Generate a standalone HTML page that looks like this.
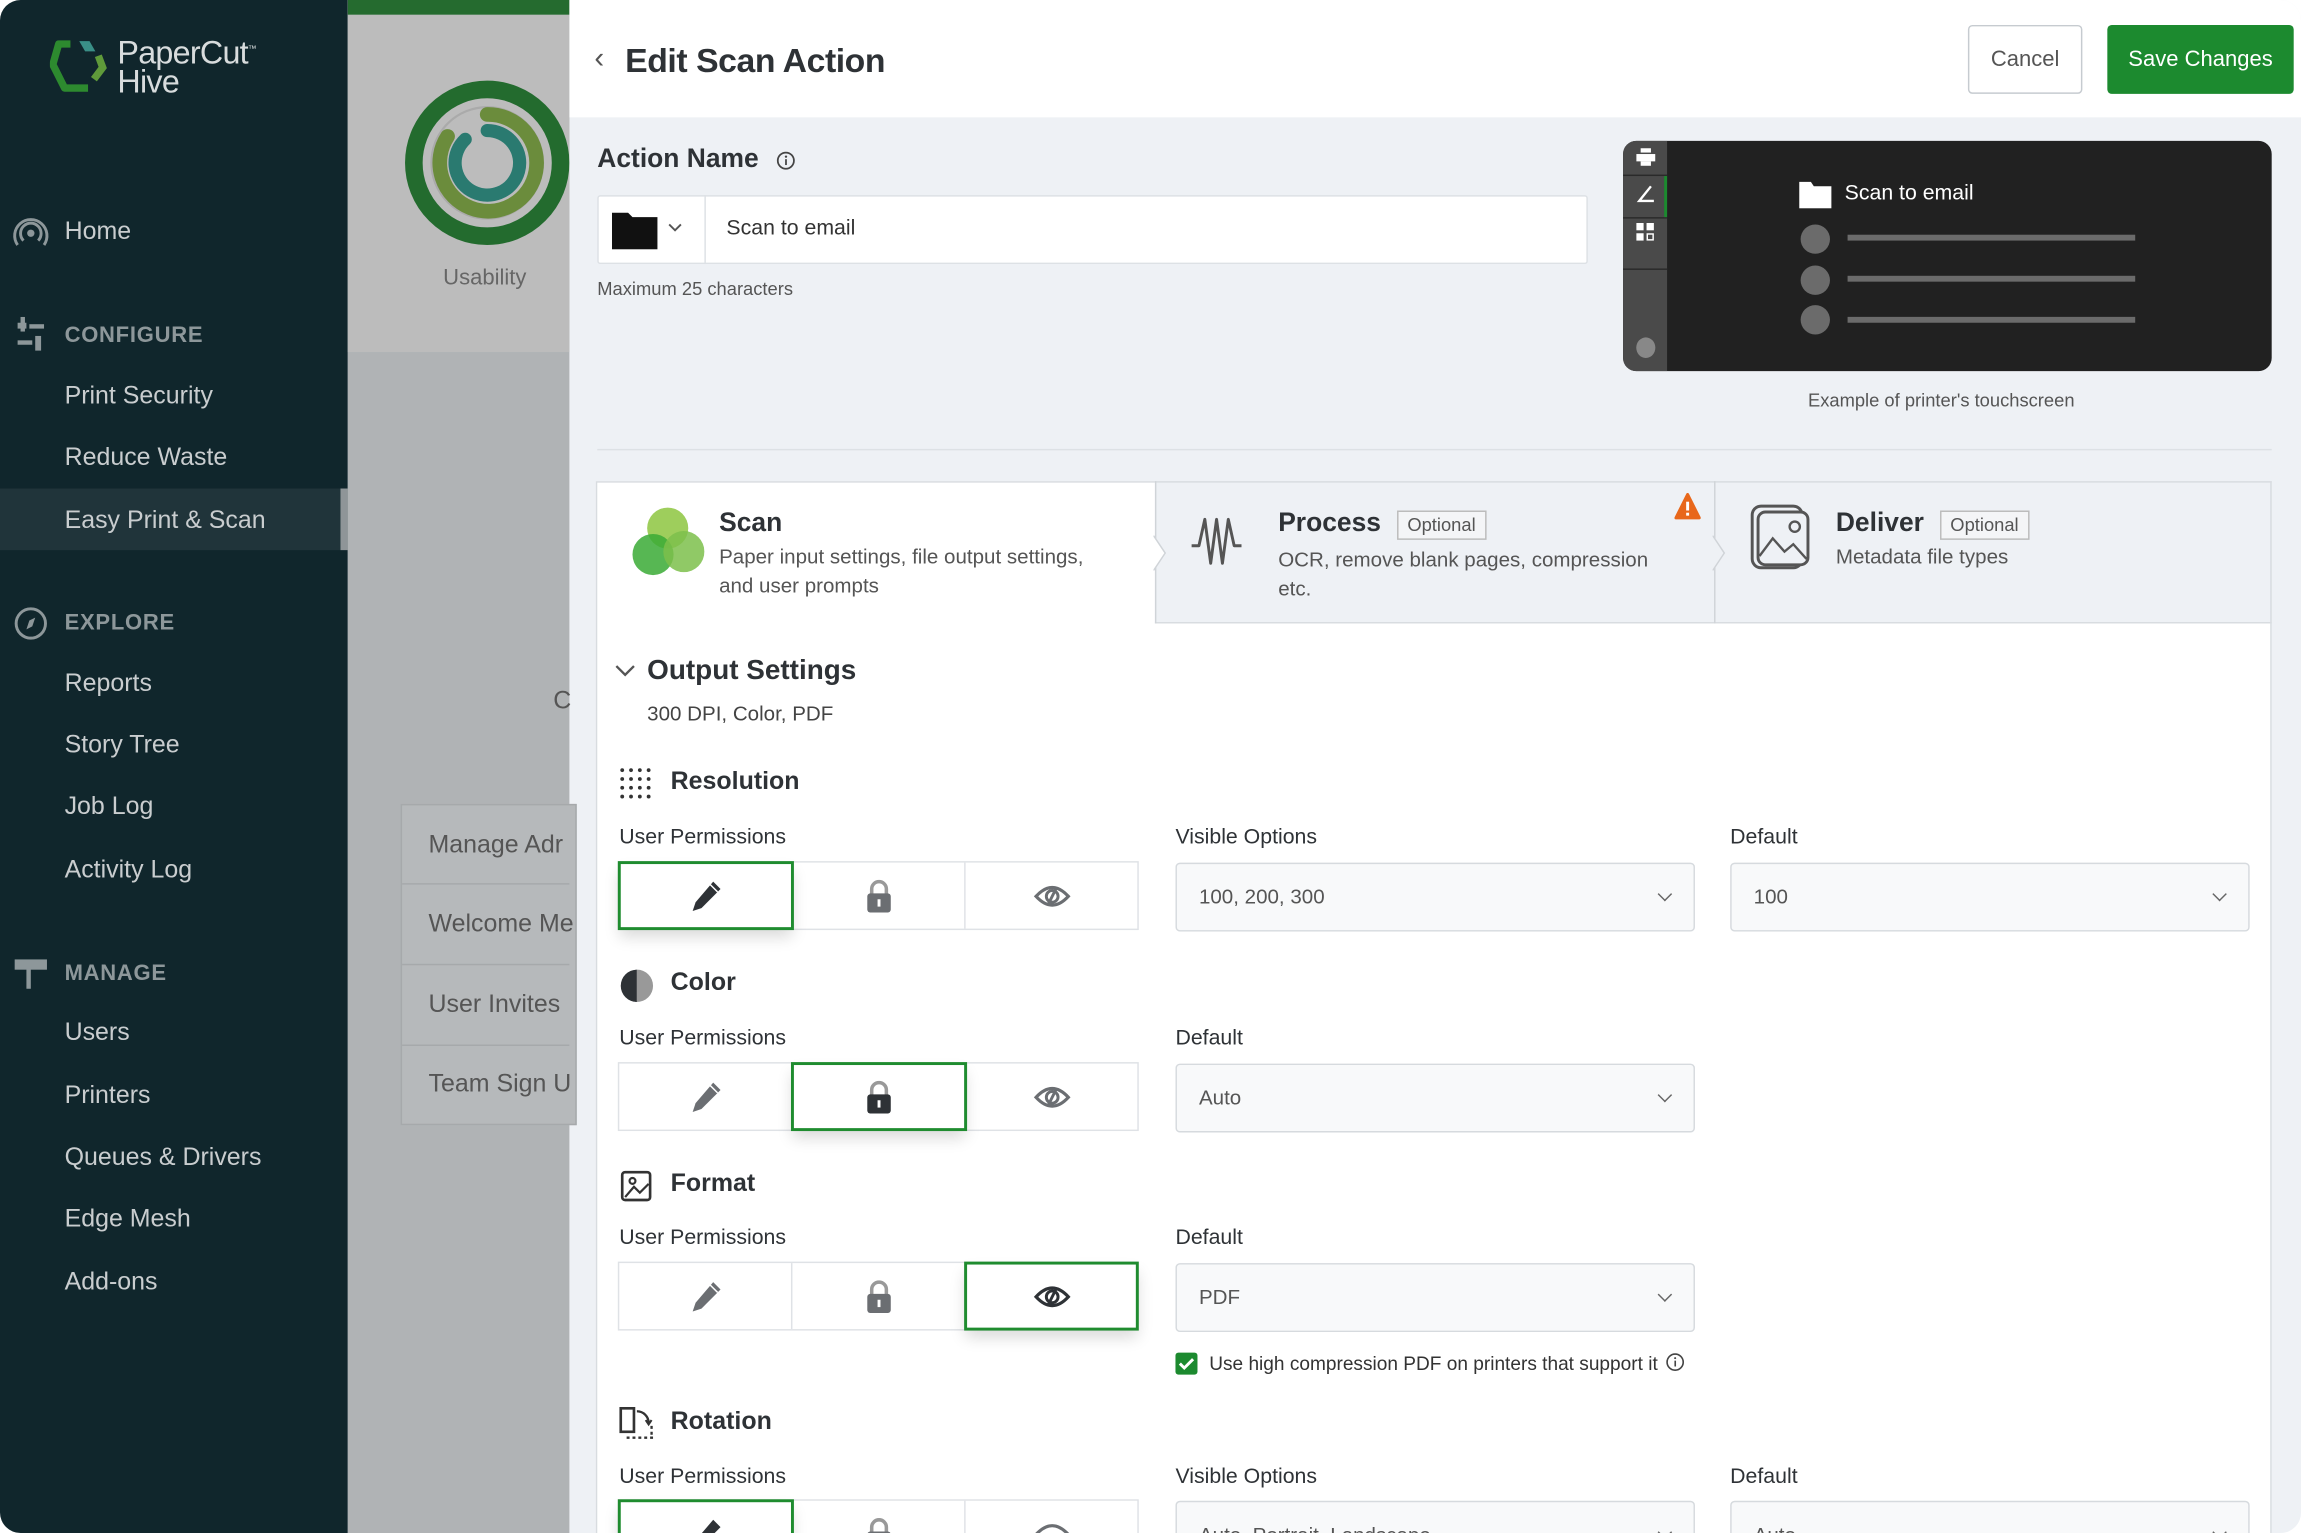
<!DOCTYPE html>
<html><head><meta charset="utf-8">
<style>
*{box-sizing:border-box;margin:0;padding:0}
html,body{width:2301px;height:1533px;overflow:hidden;background:#fff;font-family:"Liberation Sans",sans-serif}
#w{position:absolute;left:0;top:0;width:1568px;height:1045px;transform:scale(1.4675,1.467);transform-origin:0 0;overflow:hidden;border-radius:14px;background:#eef1f5}
.a{position:absolute}
.side{left:0;top:0;width:237px;height:1045px;background:#10262c;color:#c8cdcf}
.nav{position:absolute;left:44px;font-size:17px;color:#c9cdcf}
.sec{position:absolute;left:44px;font-size:15px;font-weight:bold;color:#8d979a;letter-spacing:.5px}
.lbl{position:absolute;font-size:14.5px;color:#2e3236}
.h{position:absolute;font-size:17px;font-weight:bold;color:#2e3236}
.perm{position:absolute;width:355px;height:47px;border:1px solid #dfe2e6;background:#fff;display:flex}
.perm div{flex:1;border-right:1px solid #dfe2e6;display:flex;align-items:center;justify-content:center;position:relative}
.perm div:last-child{border-right:none}
.perm .on{outline:2px solid #1f8c2f;outline-offset:-1px;box-shadow:0 6px 10px rgba(0,0,0,.15);z-index:2}
.sel{position:absolute;width:354px;height:47px;border:1px solid #d6dade;border-radius:3px;background:#f8f9fa;font-size:14px;color:#555;padding:14px 15px}
.sel:after{content:"";position:absolute;right:16px;top:17px;width:6px;height:6px;border-right:1.5px solid #666;border-bottom:1.5px solid #666;transform:rotate(45deg)}
.mi{position:absolute;left:292px;font-size:17px;color:#555;white-space:nowrap}
</style></head><body><div id="w">

<div class="a side">
 <svg class="a" style="left:34px;top:24px" width="44" height="42" viewBox="0 0 44 42"><path d="M14 6 L6 6 L2 20 L10 36 L26 36" fill="none" stroke="#2d8a2f" stroke-width="5" stroke-linejoin="round"/><path d="M30 30 L36 22 L33 14" fill="none" stroke="#5f9a3a" stroke-width="5"/><path d="M20 4 L27 4 L31 11 L24 11Z" fill="#3a8f87"/></svg>
 <div class="a" style="left:80px;top:24px;font-size:22px;color:#d8dcdd;line-height:20px;letter-spacing:-.5px">PaperCut<sup style="font-size:6px">™</sup><br>Hive</div>
 <svg class="a" style="left:8px;top:147px" width="26" height="24" viewBox="0 0 26 24"><circle cx="13" cy="12" r="2.5" fill="#8d979a"/><path d="M8 17a7 7 0 1 1 10 0" fill="none" stroke="#8d979a" stroke-width="2"/><path d="M4 20a11 11 0 1 1 18 0" fill="none" stroke="#8d979a" stroke-width="2"/></svg>
 <div class="nav" style="top:148px">Home</div>
 <svg class="a" style="left:10px;top:216px" width="22" height="24" viewBox="0 0 22 24"><rect x="2" y="4" width="6" height="4" fill="#8d979a"/><rect x="4" y="0" width="3" height="10" fill="#8d979a"/><rect x="10" y="5" width="10" height="3" fill="#8d979a"/><rect x="2" y="16" width="10" height="3" fill="#8d979a"/><rect x="14" y="13" width="4" height="10" fill="#8d979a"/></svg>
 <div class="sec" style="top:220px">CONFIGURE</div>
 <div class="nav" style="top:260px">Print Security</div>
 <div class="nav" style="top:302px">Reduce Waste</div>
 <div class="a" style="left:0;top:333px;width:232px;height:42px;background:#20343a"></div>
 <div class="a" style="left:232px;top:333px;width:5px;height:42px;background:#8f9598"></div>
 <div class="nav" style="top:345px">Easy Print &amp; Scan</div>
 <svg class="a" style="left:8px;top:412px" width="26" height="26" viewBox="0 0 26 26"><circle cx="13" cy="13" r="10" fill="none" stroke="#8d979a" stroke-width="2"/><path d="M16 9 L14 15 L10 17 L12 11Z" fill="#8d979a"/></svg>
 <div class="sec" style="top:416px">EXPLORE</div>
 <div class="nav" style="top:456px">Reports</div>
 <div class="nav" style="top:498px">Story Tree</div>
 <div class="nav" style="top:540px">Job Log</div>
 <div class="nav" style="top:583px">Activity Log</div>
 <svg class="a" style="left:8px;top:650px" width="26" height="26" viewBox="0 0 26 26"><rect x="2" y="4" width="22" height="7" fill="#8d979a"/><rect x="10" y="10" width="3" height="14" fill="#8d979a"/></svg>
 <div class="sec" style="top:655px">MANAGE</div>
 <div class="nav" style="top:694px">Users</div>
 <div class="nav" style="top:737px">Printers</div>
 <div class="nav" style="top:779px">Queues &amp; Drivers</div>
 <div class="nav" style="top:821px">Edge Mesh</div>
 <div class="nav" style="top:864px">Add-ons</div>
</div>

<div class="a" style="left:237px;top:0;width:151px;height:1045px;background:#b0b3b5"></div>
<div class="a" style="left:237px;top:0;width:151px;height:240px;background:#bcbcbc"></div>
<div class="a" style="left:237px;top:0;width:151px;height:10px;background:#256b2f"></div>
<svg class="a" style="left:275px;top:53px" width="113" height="118" viewBox="0 0 113 118"><circle cx="57" cy="58" r="50" fill="none" stroke="#236b2e" stroke-width="12"/><circle cx="57" cy="58" r="38" fill="none" stroke="#aaa" stroke-width="1.5"/><path d="M57 25 A33 33 0 1 1 30 40" fill="none" stroke="#6b8c3c" stroke-width="10" stroke-linecap="round"/><path d="M57 36 A22 22 0 1 1 42 42" fill="none" stroke="#2a7a70" stroke-width="9" stroke-linecap="round"/></svg>
<div class="a" style="left:302px;top:181px;font-size:15px;color:#666">Usability</div>
<div class="a" style="left:377px;top:468px;font-size:17px;color:#555">C</div>
<div class="a" style="left:273px;top:548px;width:120px;height:219px;background:#b6b9bb;border:1px solid #a6a9ab"></div>
<div class="mi" style="top:566px">Manage Adr</div>
<div class="mi" style="top:620px">Welcome Me</div>
<div class="mi" style="top:675px">User Invites</div>
<div class="mi" style="top:729px">Team Sign U</div>
<div class="a" style="left:274px;top:602px;width:114px;height:1px;background:#a6a9ab"></div>
<div class="a" style="left:274px;top:657px;width:114px;height:1px;background:#a6a9ab"></div>
<div class="a" style="left:274px;top:712px;width:114px;height:1px;background:#a6a9ab"></div>

<div class="a" style="left:388px;top:0;width:1180px;height:80px;background:#fff"></div>
<div class="a" style="left:405px;top:29px;font-size:20px;color:#555">‹</div>
<div class="a" style="left:426px;top:28px;font-size:23px;color:#2e3236;font-weight:bold;letter-spacing:-.3px">Edit Scan Action</div>
<div class="a" style="left:1341px;top:17px;width:78px;height:47px;border:1px solid #c6cbd0;border-radius:3px;background:#fff;font-size:15px;color:#555;text-align:center;line-height:45px">Cancel</div>
<div class="a" style="left:1436px;top:17px;width:127px;height:47px;background:#1c8a2f;border-radius:3px;font-size:15px;color:#fff;text-align:center;line-height:47px">Save Changes</div>

<div class="a" style="left:407px;top:98px;font-size:18px;font-weight:bold;color:#2e3236">Action Name</div>
<svg class="a" style="left:529px;top:103px" width="13" height="13" viewBox="0 0 13 13"><circle cx="6.5" cy="6.5" r="5.5" fill="none" stroke="#444" stroke-width="1.2"/><rect x="6" y="5.5" width="1.2" height="4" fill="#444"/><circle cx="6.6" cy="3.8" r=".8" fill="#444"/></svg>
<div class="a" style="left:407px;top:133px;width:675px;height:47px;border:1px solid #dde1e5;background:#fff;border-radius:2px"></div>
<div class="a" style="left:480px;top:133px;width:1px;height:47px;background:#dde1e5"></div>
<svg class="a" style="left:417px;top:143px" width="32" height="27" viewBox="0 0 32 27"><path d="M0 2h11l3 3h17v22H0Z" fill="#111"/></svg>
<svg class="a" style="left:455px;top:152px" width="10" height="7" viewBox="0 0 10 7"><path d="M1 1l4 4 4-4" fill="none" stroke="#555" stroke-width="1.3"/></svg>
<div class="a" style="left:495px;top:148px;font-size:14.5px;color:#333">Scan to email</div>
<div class="a" style="left:407px;top:190px;font-size:12.5px;color:#555">Maximum 25 characters</div>

<div class="a" style="left:1106px;top:96px;width:442px;height:157px;background:#212121;border-radius:9px;overflow:hidden">
 <div class="a" style="left:0;top:0;width:30px;height:157px;background:#4a4a4a"></div>
 <div class="a" style="left:0;top:23px;width:30px;height:1px;background:#2a2a2a"></div>
 <div class="a" style="left:0;top:52px;width:30px;height:1px;background:#2a2a2a"></div>
 <div class="a" style="left:0;top:87px;width:30px;height:1px;background:#2a2a2a"></div>
 <div class="a" style="left:28px;top:24px;width:2px;height:28px;background:#1c8a2f"></div>
 <svg class="a" style="left:9px;top:5px" width="13" height="13" viewBox="0 0 13 13"><rect x="3" y="0" width="7" height="3" fill="#fff"/><rect x="0" y="4" width="13" height="5" fill="#fff"/><rect x="3" y="9" width="7" height="3" fill="#fff"/></svg>
 <svg class="a" style="left:9px;top:30px" width="13" height="13" viewBox="0 0 13 13"><path d="M10 1 L2 11 H12" fill="none" stroke="#fff" stroke-width="1.6"/></svg>
 <svg class="a" style="left:9px;top:56px" width="13" height="13" viewBox="0 0 13 13"><rect x="0" y="0" width="5" height="5" fill="#fff"/><rect x="7" y="0" width="5" height="5" fill="#fff"/><rect x="0" y="7" width="5" height="5" fill="#fff"/><rect x="7.5" y="7.5" width="4" height="4" fill="none" stroke="#fff"/></svg>
 <div class="a" style="left:9px;top:134px;width:13px;height:14px;border-radius:50%;background:#888"></div>
 <svg class="a" style="left:120px;top:27px" width="22" height="19" viewBox="0 0 22 19"><path d="M0 1h8l2 3h12v15H0Z" fill="#fff"/></svg>
 <div class="a" style="left:151px;top:28px;font-size:14.5px;color:#fff">Scan to email</div>
 <div class="a" style="left:121px;top:57px;width:20px;height:20px;border-radius:50%;background:#6b6b6b"></div>
 <div class="a" style="left:121px;top:85px;width:20px;height:20px;border-radius:50%;background:#6b6b6b"></div>
 <div class="a" style="left:121px;top:112px;width:20px;height:20px;border-radius:50%;background:#6b6b6b"></div>
 <div class="a" style="left:153px;top:64px;width:196px;height:4px;background:#6b6b6b"></div>
 <div class="a" style="left:153px;top:92px;width:196px;height:4px;background:#6b6b6b"></div>
 <div class="a" style="left:153px;top:120px;width:196px;height:4px;background:#6b6b6b"></div>
</div>
<div class="a" style="left:1232px;top:266px;font-size:12.5px;color:#555">Example of printer's touchscreen</div>
<div class="a" style="left:407px;top:306px;width:1141px;height:1px;background:#dde1e5"></div>

<div class="a" style="left:406px;top:328px;width:1142px;height:730px;background:#fff;border:1px solid #d8dce0"></div>
<div class="a" style="left:787px;top:328px;width:761px;height:97px;background:#eef1f5;border-bottom:1px solid #d8dce0;border-top:1px solid #d8dce0;border-right:1px solid #d8dce0"></div>
<div class="a" style="left:787px;top:328px;width:1px;height:97px;background:#d0d4d8"></div>
<div class="a" style="left:1168px;top:328px;width:1px;height:97px;background:#d0d4d8"></div>
<svg class="a" style="left:786px;top:365px" width="10" height="24" viewBox="0 0 10 24"><path d="M0 0 L8 12 L0 24" fill="#fff" stroke="#d0d4d8"/></svg>
<svg class="a" style="left:1167px;top:365px" width="10" height="24" viewBox="0 0 10 24"><path d="M0 0 L8 12 L0 24" fill="#eef1f5" stroke="#d0d4d8"/></svg>

<svg class="a" style="left:430px;top:345px" width="50" height="48" viewBox="0 0 50 48"><circle cx="25" cy="15" r="14" fill="#8dc63f" opacity=".85"/><circle cx="15" cy="33" r="14" fill="#3aaa35" opacity=".85"/><circle cx="36" cy="31" r="14" fill="#7cc04b" opacity=".85"/></svg>
<div class="a" style="left:490px;top:346px;font-size:18px;font-weight:bold;color:#2e3236">Scan</div>
<div class="a" style="left:490px;top:369px;font-size:14px;color:#555;line-height:20px">Paper input settings, file output settings,<br>and user prompts</div>

<svg class="a" style="left:811px;top:350px" width="48" height="40" viewBox="0 0 48 40"><path d="M1 22h5l4-18 4 30 4-30 4 30 4-30 4 18h5" fill="none" stroke="#555" stroke-width="2" stroke-linejoin="round"/></svg>
<div class="a" style="left:871px;top:346px;font-size:18px;font-weight:bold;color:#2e3236">Process</div>
<div class="a" style="left:952px;top:348px;padding:2px 6px;border:1px solid #bbb;font-size:12.5px;color:#555;background:#f4f5f7">Optional</div>
<div class="a" style="left:871px;top:371px;font-size:14px;color:#555;line-height:20px">OCR, remove blank pages, compression<br>etc.</div>
<svg class="a" style="left:1141px;top:336px" width="18" height="19" viewBox="0 0 18 19"><path d="M9 1 L17 17 H1Z" fill="#e8671b" stroke="#e8671b" stroke-linejoin="round" stroke-width="2"/><rect x="8" y="6" width="2" height="6" fill="#fff"/><rect x="8" y="13.5" width="2" height="2" fill="#fff"/></svg>

<svg class="a" style="left:1192px;top:343px" width="48" height="48" viewBox="0 0 48 48"><rect x="2" y="2" width="34" height="42" rx="6" fill="none" stroke="#555" stroke-width="2"/><rect x="6" y="6" width="34" height="36" rx="5" fill="#eef1f5" stroke="#555" stroke-width="2"/><circle cx="31" cy="16" r="3.5" fill="none" stroke="#555" stroke-width="1.6"/><path d="M7 36 L16 24 L24 33 L30 28 L39 38" fill="none" stroke="#555" stroke-width="1.6"/></svg>
<div class="a" style="left:1251px;top:346px;font-size:18px;font-weight:bold;color:#2e3236">Deliver</div>
<div class="a" style="left:1322px;top:348px;padding:2px 6px;border:1px solid #bbb;font-size:12.5px;color:#555;background:#f4f5f7">Optional</div>
<div class="a" style="left:1251px;top:371px;font-size:14px;color:#555">Metadata file types</div>

<svg class="a" style="left:419px;top:453px" width="14" height="10" viewBox="0 0 14 10"><path d="M1 1l6 6 6-6" fill="none" stroke="#555" stroke-width="1.6"/></svg>
<div class="a" style="left:441px;top:447px;font-size:19px;font-weight:bold;color:#2e3236">Output Settings</div>
<div class="a" style="left:441px;top:478px;font-size:14px;color:#444">300 DPI, Color, PDF</div>

<svg class="a" style="left:422px;top:523px" width="24" height="24" viewBox="0 0 24 24"><g fill="#333"><circle cx="2" cy="2" r="1.3"/><circle cx="8" cy="2" r="1.3"/><circle cx="14" cy="2" r="1.3"/><circle cx="20" cy="2" r="1.3"/><circle cx="2" cy="8" r="1.3"/><circle cx="8" cy="8" r="1.3"/><circle cx="14" cy="8" r="1.3"/><circle cx="20" cy="8" r="1.3"/><circle cx="2" cy="14" r="1.3"/><circle cx="8" cy="14" r="1.3"/><circle cx="14" cy="14" r="1.3"/><circle cx="20" cy="14" r="1.3"/><circle cx="2" cy="20" r="1.3"/><circle cx="8" cy="20" r="1.3"/><circle cx="14" cy="20" r="1.3"/><circle cx="20" cy="20" r="1.3"/></g></svg>
<div class="h" style="left:457px;top:523px">Resolution</div>
<div class="lbl" style="left:422px;top:563px">User Permissions</div>
<div class="lbl" style="left:801px;top:563px">Visible Options</div>
<div class="lbl" style="left:1179px;top:563px">Default</div>

<div class="perm" style="left:421px;top:587px">
 <div class="on"><svg width="26" height="26" viewBox="0 0 26 26"><path d="M18 3l5 5L10 21l-6 2 2-6Z" fill="#2e3236"/><path d="M16 5l5 5" stroke="#fff" stroke-width="1"/></svg></div>
 <div><svg width="20" height="24" viewBox="0 0 20 24"><path d="M5 11V7a5 5 0 0 1 10 0v4" fill="none" stroke="#999" stroke-width="2.4"/><rect x="2" y="10" width="16" height="13" rx="2" fill="#6b6e72"/><rect x="9" y="14" width="2" height="5" fill="#fff"/></svg></div>
 <div><svg width="26" height="20" viewBox="0 0 26 20"><path d="M2 10 Q13 -2 24 10 Q13 22 2 10Z" fill="none" stroke="#6b6e72" stroke-width="2.2"/><circle cx="13" cy="10" r="4" fill="none" stroke="#6b6e72" stroke-width="2"/><path d="M16 4 L10 16" stroke="#6b6e72" stroke-width="2"/></svg></div>
</div>
<div class="sel" style="left:801px;top:588px">100, 200, 300</div>
<div class="sel" style="left:1179px;top:588px">100</div>

<svg class="a" style="left:422px;top:660px" width="24" height="24" viewBox="0 0 24 24"><path d="M12 1a11 11 0 0 0 0 22Z" fill="#2e3236"/><path d="M12 1a11 11 0 0 1 0 22Z" fill="#999"/></svg>
<div class="h" style="left:457px;top:660px">Color</div>
<div class="lbl" style="left:422px;top:700px">User Permissions</div>
<div class="lbl" style="left:801px;top:700px">Default</div>
<div class="perm" style="left:421px;top:724px">
 <div><svg width="26" height="26" viewBox="0 0 26 26"><path d="M18 3l5 5L10 21l-6 2 2-6Z" fill="#6b6e72"/><path d="M16 5l5 5" stroke="#fff" stroke-width="1"/></svg></div>
 <div class="on"><svg width="20" height="24" viewBox="0 0 20 24"><path d="M5 11V7a5 5 0 0 1 10 0v4" fill="none" stroke="#999" stroke-width="2.4"/><rect x="2" y="10" width="16" height="13" rx="2" fill="#2e3236"/><rect x="9" y="14" width="2" height="5" fill="#fff"/></svg></div>
 <div><svg width="26" height="20" viewBox="0 0 26 20"><path d="M2 10 Q13 -2 24 10 Q13 22 2 10Z" fill="none" stroke="#6b6e72" stroke-width="2.2"/><circle cx="13" cy="10" r="4" fill="none" stroke="#6b6e72" stroke-width="2"/><path d="M16 4 L10 16" stroke="#6b6e72" stroke-width="2"/></svg></div>
</div>
<div class="sel" style="left:801px;top:725px">Auto</div>

<svg class="a" style="left:422px;top:797px" width="24" height="24" viewBox="0 0 24 24"><rect x="2" y="2" width="19" height="19" rx="2" fill="none" stroke="#333" stroke-width="1.8"/><circle cx="9" cy="8" r="2" fill="none" stroke="#333" stroke-width="1.5"/><path d="M4 19 L10 12 L14 16 L20 10" fill="none" stroke="#333" stroke-width="1.5"/></svg>
<div class="h" style="left:457px;top:797px">Format</div>
<div class="lbl" style="left:422px;top:836px">User Permissions</div>
<div class="lbl" style="left:801px;top:836px">Default</div>
<div class="perm" style="left:421px;top:860px">
 <div><svg width="26" height="26" viewBox="0 0 26 26"><path d="M18 3l5 5L10 21l-6 2 2-6Z" fill="#6b6e72"/><path d="M16 5l5 5" stroke="#fff" stroke-width="1"/></svg></div>
 <div><svg width="20" height="24" viewBox="0 0 20 24"><path d="M5 11V7a5 5 0 0 1 10 0v4" fill="none" stroke="#999" stroke-width="2.4"/><rect x="2" y="10" width="16" height="13" rx="2" fill="#6b6e72"/><rect x="9" y="14" width="2" height="5" fill="#fff"/></svg></div>
 <div class="on"><svg width="26" height="20" viewBox="0 0 26 20"><path d="M2 10 Q13 -2 24 10 Q13 22 2 10Z" fill="none" stroke="#2e3236" stroke-width="2.2"/><circle cx="13" cy="10" r="4" fill="none" stroke="#2e3236" stroke-width="2"/><path d="M16 4 L10 16" stroke="#2e3236" stroke-width="2"/></svg></div>
</div>
<div class="sel" style="left:801px;top:861px">PDF</div>
<div class="a" style="left:801px;top:922px;width:15px;height:15px;background:#1c8a2f;border-radius:2px"></div>
<svg class="a" style="left:801px;top:922px" width="15" height="15" viewBox="0 0 15 15"><path d="M3 7.5l3 3 6-6" fill="none" stroke="#fff" stroke-width="2"/></svg>
<div class="a" style="left:824px;top:922px;font-size:13px;color:#333">Use high compression PDF on printers that support it</div>
<svg class="a" style="left:1135px;top:922px" width="13" height="13" viewBox="0 0 13 13"><circle cx="6.5" cy="6.5" r="5.5" fill="none" stroke="#444" stroke-width="1.1"/><rect x="6" y="5.5" width="1.1" height="4" fill="#444"/><circle cx="6.5" cy="3.8" r=".7" fill="#444"/></svg>

<svg class="a" style="left:421px;top:958px" width="26" height="26" viewBox="0 0 26 26"><rect x="2" y="2" width="9" height="16" fill="none" stroke="#333" stroke-width="1.8"/><path d="M13 4 a8 8 0 0 1 8 8" fill="none" stroke="#333" stroke-width="1.6"/><path d="M19 10l2 3 2-3" fill="none" stroke="#333" stroke-width="1.4"/><path d="M6 22h18M23 14v8" fill="none" stroke="#333" stroke-width="1.6" stroke-dasharray="2 2"/></svg>
<div class="h" style="left:457px;top:959px">Rotation</div>
<div class="lbl" style="left:422px;top:999px">User Permissions</div>
<div class="lbl" style="left:801px;top:999px">Visible Options</div>
<div class="lbl" style="left:1179px;top:999px">Default</div>
<div class="perm" style="left:421px;top:1022px">
 <div class="on"><svg width="26" height="26" viewBox="0 0 26 26"><path d="M18 3l5 5L10 21l-6 2 2-6Z" fill="#2e3236"/></svg></div>
 <div><svg width="20" height="24" viewBox="0 0 20 24"><path d="M5 11V7a5 5 0 0 1 10 0v4" fill="none" stroke="#999" stroke-width="2.4"/><rect x="2" y="10" width="16" height="13" rx="2" fill="#6b6e72"/></svg></div>
 <div><svg width="26" height="20" viewBox="0 0 26 20"><path d="M2 10 Q13 -2 24 10 Q13 22 2 10Z" fill="none" stroke="#6b6e72" stroke-width="2.2"/></svg></div>
</div>
<div class="sel" style="left:801px;top:1023px">Auto, Portrait, Landscape</div>
<div class="sel" style="left:1179px;top:1023px">Auto</div>

</div></body></html>
